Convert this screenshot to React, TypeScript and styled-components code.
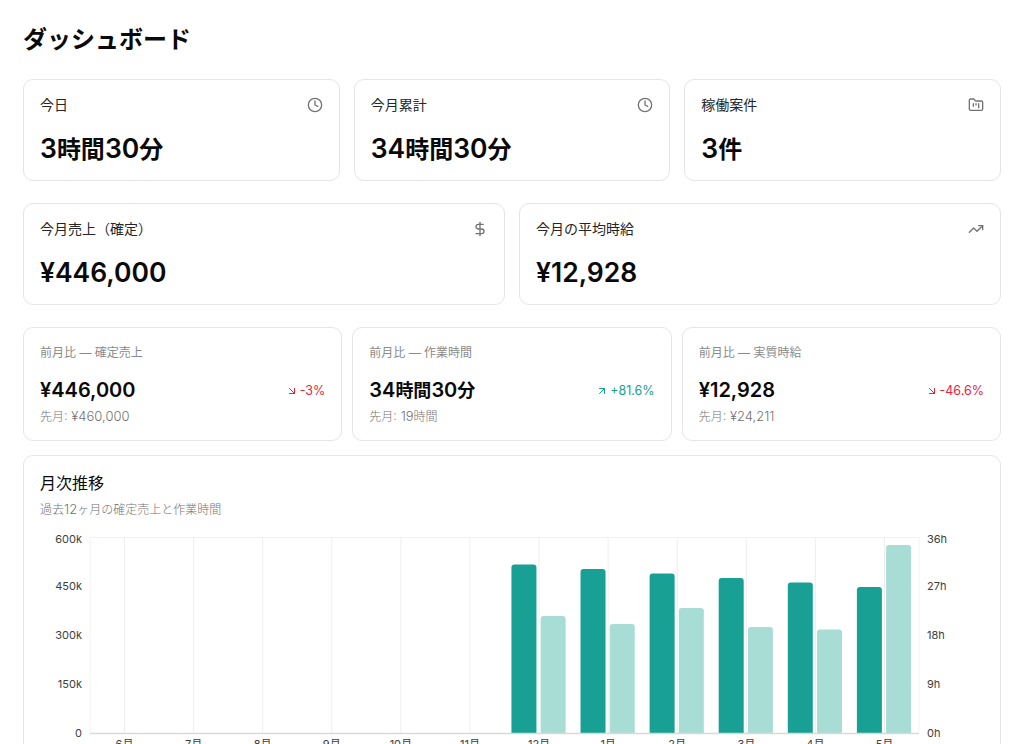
import React from "react";
import styled, { createGlobalStyle } from "styled-components";
import { Clock, FolderKanban, DollarSign, TrendingUp, ArrowDownRight, ArrowUpRight } from "lucide-react";

const Global = createGlobalStyle`
  html, body { margin: 0; padding: 0; background: #fff; overflow: hidden; height: 744px; }
  body { font-family: Inter, "Noto Sans CJK JP", sans-serif; color: #0a0a0a; }
`;

const Page = styled.main`
  padding: 24px 23px;
  display: flex;
  flex-direction: column;
`;
const Title = styled.h1`
  margin: 0 0 23px;
  font-size: 24px;
  line-height: 32px;
  font-weight: 700;
`;
const Row = styled.section<{ $cols: number; $gap: number; $after: number }>`
  display: grid;
  grid-template-columns: repeat(${(p) => p.$cols}, 1fr);
  gap: ${(p) => p.$gap}px;
  margin-bottom: ${(p) => p.$after}px;
`;
const Card = styled.div`
  background: #fff;
  border: 1px solid #e5e5e5;
  border-radius: 10px;
`;
const StatCard = styled(Card)`
  height: 102px;
  box-sizing: border-box;
  padding: 15px 16px 16px;
`;
const StatHead = styled.div`
  display: flex;
  justify-content: space-between;
  align-items: center;
  height: 20px;
  font-size: 14px;
  line-height: 20px;
  color: #262626;
  svg { color: #737373; }
`;
const StatValue = styled.div`
  margin-top: 15px;
  font-size: 24px;
  line-height: 36px;
  font-weight: 600;
`;
/* Latin runs are set a little larger than the Japanese around them */
const StatLatin = styled.span`
  font-size: 26.5px;
`;
const CompareCard = styled(Card)`
  height: 114px;
  box-sizing: border-box;
  padding: 17px 16px 0;
`;
const CompareLabel = styled.div`
  font-size: 12px;
  line-height: 16px;
  color: #8a8a8a;
`;
const CompareMain = styled.div`
  margin-top: 15px;
  display: flex;
  justify-content: space-between;
  align-items: center;
  height: 28px;
`;
const CompareValue = styled.div`
  font-size: 18px;
  line-height: 28px;
  font-weight: 600;
`;
const CompareLatin = styled.span`
  font-size: 20px;
`;
const Delta = styled.div<{ $up?: boolean }>`
  display: flex;
  align-items: center;
  gap: 2px;
  padding-top: 2px;
  font-size: 12.5px;
  line-height: 16px;
  font-weight: 400;
  color: ${(p) => (p.$up ? "#17a093" : "#f0203a")};
`;
const Previous = styled.div`
  margin-top: 4px;
  font-size: 12px;
  line-height: 16px;
  font-weight: 300;
  color: #737373;
`;
const SmallLatin = styled.span`
  font-size: 13px;
`;
const ChartCard = styled(Card)`
  padding: 16px;
  height: 400px;
  box-sizing: border-box;
`;
const ChartTitle = styled.h2`
  margin: 0;
  font-size: 16px;
  line-height: 22px;
  font-weight: 400;
`;
const ChartSub = styled.p`
  margin: 7px 0 0;
  font-size: 12px;
  line-height: 16px;
  font-weight: 300;
  color: #737373;
`;
const ChartSvg = styled.svg`
  display: block;
  margin-top: 11px;
  text { font-family: Inter, "Noto Sans CJK JP", sans-serif; font-size: 11px; fill: #404040; }
`;

/* Wraps each Latin run of a string in the given span */
function Mixed({ text, as: Latin }: { text: string; as: React.ElementType }) {
  const parts = text.split(/([¥0-9,.:\s]+)/).filter(Boolean);
  return (
    <>
      {parts.map((p, i) => (/^[¥0-9,.:\s]+$/.test(p) ? <Latin key={i}>{p}</Latin> : <React.Fragment key={i}>{p}</React.Fragment>))}
    </>
  );
}

const months = ["6月", "7月", "8月", "9月", "10月", "11月", "12月", "1月", "2月", "3月", "4月", "5月"];
const bars = [
  { i: 6, a: 564.5, b: 616 },
  { i: 7, a: 569, b: 624 },
  { i: 8, a: 573.5, b: 608 },
  { i: 9, a: 578, b: 627 },
  { i: 10, a: 582.5, b: 629.5 },
  { i: 11, a: 587, b: 545 },
];
const ticks = [
  { y: 539, l: "600k", r: "36h" },
  { y: 586, l: "450k", r: "27h" },
  { y: 635, l: "300k", r: "18h" },
  { y: 684, l: "150k", r: "9h" },
  { y: 733, l: "0", r: "0h" },
];
// SVG origin in page coordinates
const OX = 40;
const OY = 529;
const barPath = (x: number, top: number, w: number, bottom: number) =>
  `M${x} ${bottom}V${top + 3}Q${x} ${top} ${x + 3} ${top}H${x + w - 3}Q${x + w} ${top} ${x + w} ${top + 3}V${bottom}Z`;

function Chart() {
  const cx = (i: number) => 124.5 + i * 69.09;
  return (
    <ChartSvg width={944} height={240} viewBox={`${OX} ${OY} 944 240`}>
      <path d="M90 537.5H919M90 537V733M919 537V733" stroke="#f2f2f2" fill="none" />
      {months.map((_, i) => (
        <line key={i} x1={cx(i)} x2={cx(i)} y1={537} y2={733} stroke="#eeeeee" />
      ))}
      {bars.map((b) => {
        const c = cx(b.i);
        return (
          <g key={b.i}>
            <path d={barPath(c - 27.6, b.a, 25, 733.5)} fill="#17a093" />
            <path d={barPath(c + 1.6, b.b, 25, 733.5)} fill="#a8ddd6" />
          </g>
        );
      })}
      <line x1={90} x2={919} y1={733.5} y2={733.5} stroke="#d9d9d9" strokeWidth={1.5} />
      {ticks.map((t) => (
        <g key={t.r}>
          <text x={82} y={t.y + 4} textAnchor="end">{t.l}</text>
          <text x={927} y={t.y + 4}>{t.r}</text>
        </g>
      ))}
      {months.map((m, i) => (
        <text key={m} x={cx(i)} y={748} textAnchor="middle">{m}</text>
      ))}
    </ChartSvg>
  );
}

function Stat({ label, value, icon }: { label: string; value: string; icon: React.ReactNode }) {
  return (
    <StatCard>
      <StatHead><span>{label}</span>{icon}</StatHead>
      <StatValue><Mixed text={value} as={StatLatin} /></StatValue>
    </StatCard>
  );
}

function Compare({ label, value, delta, prev, up }: { label: string; value: string; delta: string; prev: string; up?: boolean }) {
  return (
    <CompareCard>
      <CompareLabel>{label}</CompareLabel>
      <CompareMain>
        <CompareValue><Mixed text={value} as={CompareLatin} /></CompareValue>
        <Delta $up={up}>
          {up ? <ArrowUpRight size={12} strokeWidth={2} /> : <ArrowDownRight size={12} strokeWidth={2} />}
          {delta}
        </Delta>
      </CompareMain>
      <Previous><Mixed text={prev} as={SmallLatin} /></Previous>
    </CompareCard>
  );
}

const ic = { size: 16, strokeWidth: 2 };

export default function App() {
  return (
    <Page>
      <Global />
      <Title>ダッシュボード</Title>
      <Row $cols={3} $gap={14} $after={22}>
        <Stat label="今日" value="3時間30分" icon={<Clock {...ic} />} />
        <Stat label="今月累計" value="34時間30分" icon={<Clock {...ic} />} />
        <Stat label="稼働案件" value="3件" icon={<FolderKanban {...ic} />} />
      </Row>
      <Row $cols={2} $gap={14} $after={22}>
        <Stat label="今月売上（確定）" value="¥446,000" icon={<DollarSign {...ic} />} />
        <Stat label="今月の平均時給" value="¥12,928" icon={<TrendingUp {...ic} />} />
      </Row>
      <Row $cols={3} $gap={10} $after={14}>
        <Compare label="前月比 — 確定売上" value="¥446,000" delta="-3%" prev="先月: ¥460,000" />
        <Compare label="前月比 — 作業時間" value="34時間30分" delta="+81.6%" prev="先月: 19時間" up />
        <Compare label="前月比 — 実質時給" value="¥12,928" delta="-46.6%" prev="先月: ¥24,211" />
      </Row>
      <ChartCard>
        <ChartTitle>月次推移</ChartTitle>
        <ChartSub><Mixed text="過去12ヶ月の確定売上と作業時間" as={SmallLatin} /></ChartSub>
        <Chart />
      </ChartCard>
    </Page>
  );
}
